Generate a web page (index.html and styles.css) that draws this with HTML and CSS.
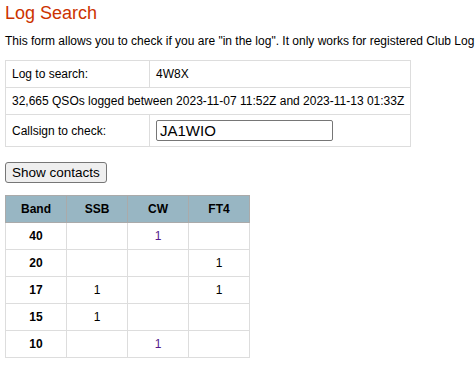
FILE: index.html
```html
<!DOCTYPE html>
<html lang="en">
<head>
    <meta charset="UTF-8">
    <title>Log Search</title>
    <link rel="stylesheet" href="styles.css">
</head>
<body>
    <div class="page">
        <h1>Log Search</h1>
        <p class="intro">This form allows you to check if you are "in the log". It only works for registered Club Log</p>

        <form class="search-form">
            <table class="form-table">
                <tr>
                    <td class="label">Log to search:</td>
                    <td>4W8X</td>
                </tr>
                <tr>
                    <td colspan="2">32,665 QSOs logged between 2023-11-07 11:52Z and 2023-11-13 01:33Z</td>
                </tr>
                <tr>
                    <td class="label">Callsign to check:</td>
                    <td><input type="text" class="call-input" value="JA1WIO"></td>
                </tr>
            </table>

            <button type="button" class="show-btn">Show contacts</button>
        </form>

        <table class="band-table">
            <thead>
                <tr><th>Band</th><th>SSB</th><th>CW</th><th>FT4</th></tr>
            </thead>
            <tbody>
                <tr><td class="band">40</td><td></td><td><a class="qso seen">1</a></td><td></td></tr>
                <tr><td class="band">20</td><td></td><td></td><td><a class="qso">1</a></td></tr>
                <tr><td class="band">17</td><td><a class="qso">1</a></td><td></td><td><a class="qso">1</a></td></tr>
                <tr><td class="band">15</td><td><a class="qso">1</a></td><td></td><td></td></tr>
                <tr><td class="band">10</td><td></td><td><a class="qso seen">1</a></td><td></td></tr>
            </tbody>
        </table>
    </div>
</body>
</html>
```

FILE: styles.css
```css
body {
    margin: 0;
    padding: 0 5px;
    font-family: "Liberation Sans", Arial, sans-serif;
    font-size: 12px;
    color: #000;
    background: #fff;
}
h1 {
    margin: 0;
    padding-top: 2px;
    font-size: 18px;
    font-weight: normal;
    line-height: 22px;
    color: #cc3300;
}
.intro {
    margin: 9px 0 0;
    line-height: 16px;
    white-space: nowrap;
}
.form-table {
    margin-top: 11px;
    border-collapse: collapse;
}
.form-table td {
    border: 1px solid #dddddd;
    padding: 5px 6px;
    height: 16px;
    line-height: 16px;
}
.form-table .label {
    width: 131px;
}
.call-input {
    width: 177px;
    height: 21px;
    box-sizing: border-box;
    margin: 0;
    padding: 1px 3px;
    font-family: "Liberation Sans", Arial, sans-serif;
    font-size: 15px;
    border: 1px solid #767676;
    border-radius: 2px;
}
.show-btn {
    display: block;
    margin-top: 15px;
    height: 21px;
    padding: 0 6px;
    font-family: "Liberation Sans", Arial, sans-serif;
    font-size: 13.5px;
    background: #efefef;
    border: 1px solid #767676;
    border-radius: 3px;
    color: #000;
}
.band-table {
    margin-top: 12px;
    border-collapse: collapse;
}
.band-table th,
.band-table td {
    width: 50px;
    height: 16px;
    padding: 5px;
    text-align: center;
    line-height: 16px;
}
.band-table th {
    background: #98b6c3;
    border: 1px solid #aaaaaa;
    font-weight: bold;
}
.band-table td {
    border: 1px solid #dddddd;
}
.band-table .band {
    font-weight: bold;
}
.qso {
    color: #000;
}
.qso.seen {
    color: #551a8b;
}
```
